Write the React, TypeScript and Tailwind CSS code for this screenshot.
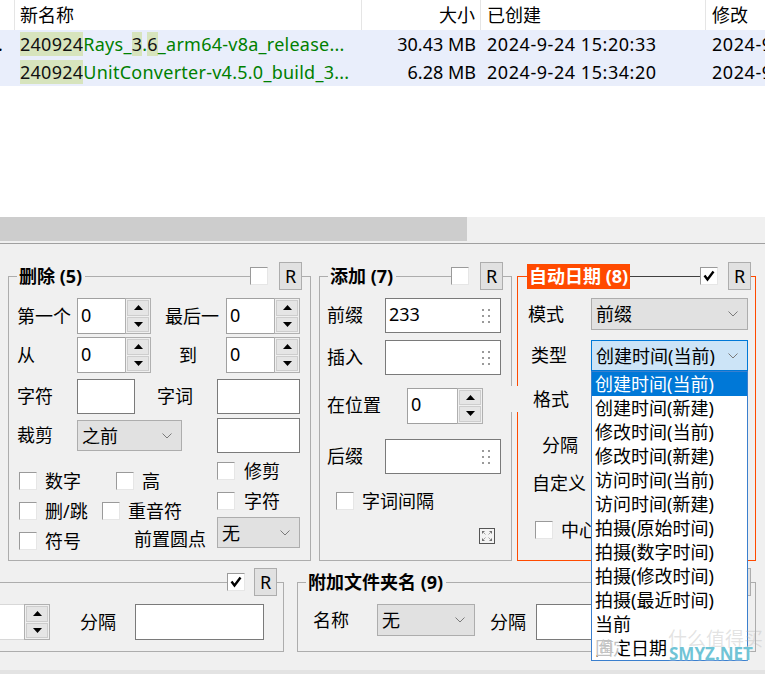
import React from "react";

const GB = "border-[#adadad]";
const OR = "border-[#ff4a00]";

function Checkbox({ checked }: { checked?: boolean }) {
  return (
    <div className="w-[18px] h-[18px] shrink-0 bg-white border border-[#9a9a9a] border-r-[#e6e6e6] border-b-[#e6e6e6] flex items-center justify-center">
      {checked && (
        <svg width="12" height="12" viewBox="0 0 12 12">
          <path d="M1.5 5.5 L4.5 9.5 L10.5 1.5" fill="none" stroke="#000" strokeWidth="2.4" />
        </svg>
      )}
    </div>
  );
}

function RBtn() {
  return (
    <div className="w-[23px] h-[28px] shrink-0 bg-[#e1e1e1] border border-[#adadad] flex items-center justify-center text-[18px] leading-none">
      R
    </div>
  );
}

const Up = () => (
  <svg width="9" height="5" viewBox="0 0 9 5">
    <path d="M0 5 L4.5 0 L9 5Z" fill="#000" />
  </svg>
);
const Down = () => (
  <svg width="9" height="5" viewBox="0 0 9 5">
    <path d="M0 0 L4.5 5 L9 0Z" fill="#000" />
  </svg>
);

function Spin({ inputCls, h }: { inputCls: string; h: string }) {
  return (
    <div className={`flex shrink-0 ${h}`}>
      <div className={`bg-white border border-[#a0a0a0] border-r-0 flex items-center pl-[3px] leading-none ${inputCls}`}>
        <span className="-mt-[3px]">0</span>
      </div>
      <div className="w-[26px] flex flex-col border border-[#b0b0b0] bg-[#f0f0f0] p-px gap-px">
        <div className="flex-1 bg-[#e5e5e5] border border-[#cdcdcd] flex items-center justify-center">
          <Up />
        </div>
        <div className="flex-1 bg-[#e5e5e5] border border-[#cdcdcd] flex items-center justify-center">
          <Down />
        </div>
      </div>
    </div>
  );
}

const Chevron = () => (
  <svg width="10" height="6" viewBox="0 0 10 6">
    <polyline points="0.5,0.5 5,5 9.5,0.5" fill="none" stroke="#7a7a7a" strokeWidth="1" />
  </svg>
);

function Select({ cls, text, focused }: { cls: string; text: string; focused?: boolean }) {
  return (
    <div
      className={`shrink-0 flex items-center justify-between pl-[4px] pr-[9px] leading-none border ${
        focused ? "bg-[#cce4f7] border-[#0078d7]" : "bg-[#e1e1e1] border-[#adadad]"
      } ${cls}`}
    >
      <span>{text}</span>
      <Chevron />
    </div>
  );
}

const Grip = () => (
  <svg width="8" height="14" viewBox="0 0 8 14">
    {[0, 6, 12].map((y) =>
      [0, 6].map((x) => <rect key={`${x}-${y}`} x={x} y={y} width="2" height="2" fill="#9a9a9a" />)
    )}
  </svg>
);

function TextBox({ cls, text, grip }: { cls: string; text?: string; grip?: boolean }) {
  return (
    <div className={`shrink-0 bg-white border border-[#7a7a7a] flex items-center justify-between pl-[3px] pr-[10px] leading-none ${cls}`}>
      <span className="-mt-[4px]">{text ?? ""}</span>
      {grip && <Grip />}
    </div>
  );
}

function Header({
  h,
  stubH,
  bc,
  lineBc,
  left,
  right,
  spacer,
  title,
  checked,
}: {
  h: string;
  stubH: string;
  bc: string;
  lineBc?: string;
  left?: string;
  right: string;
  spacer: string;
  title?: React.ReactNode;
  checked?: boolean;
}) {
  return (
    <div className={`flex shrink-0 ${h}`}>
      {left && <div className={`${left} ${stubH} shrink-0 self-end border-t border-l ${bc}`} />}
      {title}
      <div className={`flex-1 ${stubH} self-end border-t ${lineBc ?? bc}`} />
      <div className="self-center">
        <Checkbox checked={checked} />
      </div>
      <div className={`${spacer} shrink-0`} />
      <div className="self-center">
        <RBtn />
      </div>
      <div className={`${right} ${stubH} shrink-0 self-end border-t border-r ${bc}`} />
    </div>
  );
}

const items = [
  "创建时间(当前)",
  "创建时间(新建)",
  "修改时间(当前)",
  "修改时间(新建)",
  "访问时间(当前)",
  "访问时间(新建)",
  "拍摄(原始时间)",
  "拍摄(数字时间)",
  "拍摄(修改时间)",
  "拍摄(最近时间)",
  "当前",
  "固定日期",
];

function Hl({ children }: { children: React.ReactNode }) {
  return <span className="bg-[#d7e4bd] text-[#111]">{children}</span>;
}

export default function App() {
  return (
    <div className="relative w-[765px] h-[674px] overflow-hidden bg-white text-black text-[18px] font-['Noto_Sans','Noto_Sans_CJK_SC',sans-serif]">
      {/* file list */}
      <div className="h-[217px] bg-white overflow-hidden">
        <div className="flex h-[30px] whitespace-nowrap leading-none">
          <div className="w-[15px] shrink-0 border-r border-[#e5e5e5]" />
          <div className="w-[347px] shrink-0 border-r border-[#e5e5e5] flex items-center pl-[5px]">新名称</div>
          <div className="w-[119px] shrink-0 border-r border-[#e5e5e5] flex items-center justify-end pr-[5px]">大小</div>
          <div className="w-[225px] shrink-0 border-r border-[#e5e5e5] flex items-center pl-[6px]">已创建</div>
          <div className="flex-1 flex items-center pl-[6px]">修改</div>
        </div>
        <div className="bg-[#e9eefb] whitespace-nowrap leading-[26px]">
          <div className="flex h-[28px] items-center">
            <div className="w-[15px] shrink-0 overflow-hidden">
              <span className="-ml-[2px]">.</span>
            </div>
            <div className="w-[347px] shrink-0 pl-[5px] text-[#008000] overflow-hidden tracking-[0.25px]">
              <Hl>240924</Hl>Rays_<Hl>3</Hl>.<Hl>6</Hl>_arm64-v8a_release...
            </div>
            <div className="w-[119px] shrink-0 text-right pr-[5px]">30.43 MB</div>
            <div className="w-[225px] shrink-0 pl-[6px] tracking-[0.55px]">2024-9-24 15:20:33</div>
            <div className="flex-1 pl-[6px] overflow-hidden tracking-[0.55px]">2024-9-24 15:20:33</div>
          </div>
          <div className="flex h-[28px] items-center">
            <div className="w-[15px] shrink-0" />
            <div className="w-[347px] shrink-0 pl-[5px] text-[#008000] overflow-hidden tracking-[0.25px]">
              <Hl>240924</Hl>UnitConverter-v4.5.0_build_3...
            </div>
            <div className="w-[119px] shrink-0 text-right pr-[5px]">6.28 MB</div>
            <div className="w-[225px] shrink-0 pl-[6px] tracking-[0.55px]">2024-9-24 15:34:20</div>
            <div className="flex-1 pl-[6px] overflow-hidden tracking-[0.55px]">2024-9-24 15:34:20</div>
          </div>
        </div>
      </div>

      {/* horizontal scrollbar */}
      <div className="h-[24px] flex bg-[#f0f0f0]">
        <div className="w-[467px] bg-[#cdcdcd]" />
      </div>
      <div className="h-[2px] bg-[#f0f0f0]" />
      <div className="h-px bg-[#a0a0a0]" />

      {/* options panel */}
      <div className="h-[426px] bg-[#f0f0f0] pt-[17px] flex flex-col">
        <div className="flex pl-[8px] h-[300px] shrink-0">
          {/* 删除 (5) */}
          <div className="w-[303px] h-[300px] shrink-0 flex flex-col">
            <Header
              h="h-[30px]"
              stubH="h-[15px]"
              bc={GB}
              left="w-[9px]"
              right="w-[9px]"
              spacer="w-[11px]"
              title={<div className="self-center pl-[2px] pr-[3px] font-bold leading-none whitespace-nowrap">删除 (5)</div>}
            />
            <div className={`h-[270px] shrink-0 border-l border-r border-b ${GB} pl-[8px]`}>
              <div className="flex items-center mt-[7px] h-[36px]">
                <div className="w-[60px] shrink-0">第一个</div>
                <Spin inputCls="w-[48px]" h="h-[36px]" />
                <div className="ml-[14px] w-[61px] shrink-0">最后一</div>
                <Spin inputCls="w-[48px]" h="h-[36px]" />
              </div>
              <div className="flex items-center mt-[3px] h-[36px]">
                <div className="w-[60px] shrink-0">从</div>
                <Spin inputCls="w-[48px]" h="h-[36px]" />
                <div className="ml-[28px] w-[47px] shrink-0">到</div>
                <Spin inputCls="w-[48px]" h="h-[36px]" />
              </div>
              <div className="flex items-center mt-[6px] h-[35px]">
                <div className="w-[60px] shrink-0">字符</div>
                <TextBox cls="w-[58px] h-[35px]" />
                <div className="ml-[22px] w-[60px] shrink-0">字词</div>
                <TextBox cls="w-[83px] h-[35px]" />
              </div>
              <div className="flex items-center mt-[4px] h-[35px]">
                <div className="w-[60px] shrink-0">裁剪</div>
                <Select cls="w-[105px] h-[31px]" text="之前" />
                <div className="w-[35px] shrink-0" />
                <TextBox cls="w-[83px] h-[35px]" />
              </div>
              <div className="flex">
                <div className="w-[200px] shrink-0 pt-[13px]">
                  <div className="flex items-center h-[30px]">
                    <div className="w-[99px] shrink-0 flex items-center gap-[8px] pl-[2px]">
                      <Checkbox />
                      <span>数字</span>
                    </div>
                    <div className="flex items-center gap-[8px]">
                      <Checkbox />
                      <span>高</span>
                    </div>
                  </div>
                  <div className="flex items-center h-[30px]">
                    <div className="w-[85px] shrink-0 flex items-center gap-[8px] pl-[2px]">
                      <Checkbox />
                      <span>删/跳</span>
                    </div>
                    <div className="flex items-center gap-[8px]">
                      <Checkbox />
                      <span>重音符</span>
                    </div>
                  </div>
                  <div className="flex items-center h-[30px]">
                    <div className="w-[117px] shrink-0 flex items-center gap-[8px] pl-[2px]">
                      <Checkbox />
                      <span>符号</span>
                    </div>
                    <span className="-mt-[4px]">前置圆点</span>
                  </div>
                </div>
                <div className="w-[83px] shrink-0 pt-[3px]">
                  <div className="flex items-center h-[30px] gap-[9px]">
                    <Checkbox />
                    <span>修剪</span>
                  </div>
                  <div className="flex items-center h-[30px] gap-[9px]">
                    <Checkbox />
                    <span>字符</span>
                  </div>
                  <Select cls="w-[83px] h-[31px] mt-[1px]" text="无" />
                </div>
              </div>
            </div>
          </div>

          {/* 添加 (7) */}
          <div className="w-[193px] h-[300px] shrink-0 ml-[8px] flex flex-col">
            <Header
              h="h-[30px]"
              stubH="h-[15px]"
              bc={GB}
              left="w-[9px]"
              right="w-[9px]"
              spacer="w-[11px]"
              title={<div className="self-center pl-[2px] pr-[3px] font-bold leading-none whitespace-nowrap">添加 (7)</div>}
            />
            <div className={`h-[270px] shrink-0 border-l border-r border-b ${GB} pl-[7px]`}>
              <div className="flex items-center mt-[7px] h-[35px]">
                <div className="w-[58px] shrink-0">前缀</div>
                <TextBox cls="w-[116px] h-[35px]" text="233" grip />
              </div>
              <div className="flex items-center mt-[7px] h-[35px]">
                <div className="w-[58px] shrink-0">插入</div>
                <TextBox cls="w-[116px] h-[35px]" grip />
              </div>
              <div className="flex items-center mt-[13px] h-[35px]">
                <div className="w-[80px] shrink-0">在位置</div>
                <Spin inputCls="w-[50px]" h="h-[36px]" />
              </div>
              <div className="flex items-center mt-[16px] h-[35px]">
                <div className="w-[58px] shrink-0">后缀</div>
                <TextBox cls="w-[116px] h-[35px]" grip />
              </div>
              <div className="flex items-center mt-[12px] h-[30px] pl-[9px] gap-[8px]">
                <Checkbox />
                <span>字词间隔</span>
              </div>
              <div className="flex justify-end mt-[12px] pr-[16px] h-[16px]">
                <svg width="16" height="16" viewBox="0 0 16 16">
                  <rect x="0.5" y="0.5" width="15" height="15" fill="#f4f4f4" stroke="#555" />
                  <path d="M3.5 3.5 L6.5 6.5 M12.5 3.5 L9.5 6.5 M3.5 12.5 L6.5 9.5 M12.5 12.5 L9.5 9.5" stroke="#a5a5a5" />
                  <path d="M3 3.5h2.5M3.5 3v2.5 M13 3.5h-2.5M12.5 3v2.5 M3 12.5h2.5M3.5 13v-2.5 M13 12.5h-2.5M12.5 13v-2.5" stroke="#707070" />
                </svg>
              </div>
            </div>
          </div>

          {/* 自动日期 (8) */}
          <div className="w-[239px] h-[300px] shrink-0 ml-[5px] flex flex-col">
            <Header
              h="h-[30px]"
              stubH="h-[15px]"
              bc={OR}
              lineBc="border-[#404040]"
              left="w-[10px]"
              right="w-[5px]"
              spacer="w-[10px]"
              checked
              title={
                <div className="self-center h-[25px] w-[103px] shrink-0 bg-[#ff4a00] text-white font-bold leading-none whitespace-nowrap flex items-center pl-[2px]">
                  自动日期 (8)
                </div>
              }
            />
            <div className={`h-[270px] shrink-0 border-l border-r border-b ${OR} pl-[10px]`}>
              <div className="flex items-center mt-[7px] h-[32px]">
                <div className="w-[63px] shrink-0">模式</div>
                <Select cls="w-[157px] h-[32px]" text="前缀" />
              </div>
              <div className="flex items-center mt-[10px] h-[31px]">
                <div className="w-[63px] shrink-0 pl-[3px]">类型</div>
                <div className="relative">
                  <Select cls="w-[157px] h-[31px]" text="创建时间(当前)" focused />
                  <div className="absolute left-0 top-full z-10 w-[157px] bg-white border border-[#3a7fce] leading-[24px] whitespace-nowrap">
                    {items.map((t, i) => (
                      <div key={t} className={`h-[24px] pl-[3px] ${i === 0 ? "bg-[#0078d7] text-white" : ""}`}>
                        {t}
                      </div>
                    ))}
                  </div>
                </div>
              </div>
              <div className="flex items-center mt-[15px] h-[26px] -ml-[19px] w-[80px] bg-[#f0f0f0] pl-[24px]">格式</div>
              <div className="flex items-center mt-[20px] h-[26px] pl-[14px]">分隔</div>
              <div className="flex items-center mt-[12px] h-[26px] pl-[4px]">自定义</div>
              <div className="flex items-center mt-[21px] h-[26px] pl-[7px] gap-[8px]">
                <Checkbox />
                <span>中心</span>
              </div>
            </div>
          </div>
        </div>

        {/* bottom row */}
        <div className="flex mt-[7px] h-[84px] shrink-0">
          <div className="w-[384px] h-[84px] shrink-0 -ml-[100px] flex flex-col">
            <Header h="h-[28px]" stubH="h-[14px]" bc={GB} left="w-[9px]" right="w-[7px]" spacer="w-[9px]" checked />
            <div className={`h-[56px] shrink-0 border-l border-r border-b ${GB} pl-[59px]`}>
              <div className="flex items-center mt-[8px] h-[36px]">
                <Spin inputCls="w-[64px] border-[#d8d8d8]" h="h-[36px]" />
                <div className="ml-[30px] w-[55px] shrink-0">分隔</div>
                <TextBox cls="w-[129px] h-[36px]" />
              </div>
            </div>
          </div>
          <div className="w-[459px] h-[84px] shrink-0 ml-[13px] flex flex-col">
            <Header
              h="h-[28px]"
              stubH="h-[14px]"
              bc={GB}
              left="w-[9px]"
              right="w-[5px]"
              spacer="w-[10px]"
              title={<div className="self-center pl-[2px] pr-[3px] font-bold leading-none whitespace-nowrap">附加文件夹名 (9)</div>}
            />
            <div className={`h-[56px] shrink-0 border-l border-r border-b ${GB} pl-[15px]`}>
              <div className="flex items-start mt-[8px] h-[36px]">
                <div className="w-[64px] h-[32px] shrink-0 flex items-center">名称</div>
                <Select cls="w-[98px] h-[32px]" text="无" />
                <div className="ml-[15px] w-[46px] h-[36px] shrink-0 flex items-center">分隔</div>
                <TextBox cls="w-[150px] h-[36px]" />
              </div>
            </div>
          </div>
        </div>
      </div>
      <div className="h-[4px] bg-[#e3e3e3]" />

      {/* watermark */}
      <div className="absolute left-[593px] top-[633px] z-20 w-[27px] h-[27px] rounded-full bg-white/75 flex items-center justify-center text-[15px] text-[#c4c4c4] leading-none pointer-events-none">
        值
      </div>
      <div className="absolute left-[668px] top-[630px] z-20 text-[19px] text-[#b0b0b0]/35 leading-none pointer-events-none whitespace-nowrap">
        什么值得买
      </div>
      <div className="absolute left-[669px] top-[645px] z-20 text-[17px] font-bold text-[#70c4d6] leading-none pointer-events-none [text-shadow:0_0_2px_#ffffff] whitespace-nowrap">
        SMYZ.NET
      </div>
    </div>
  );
}
